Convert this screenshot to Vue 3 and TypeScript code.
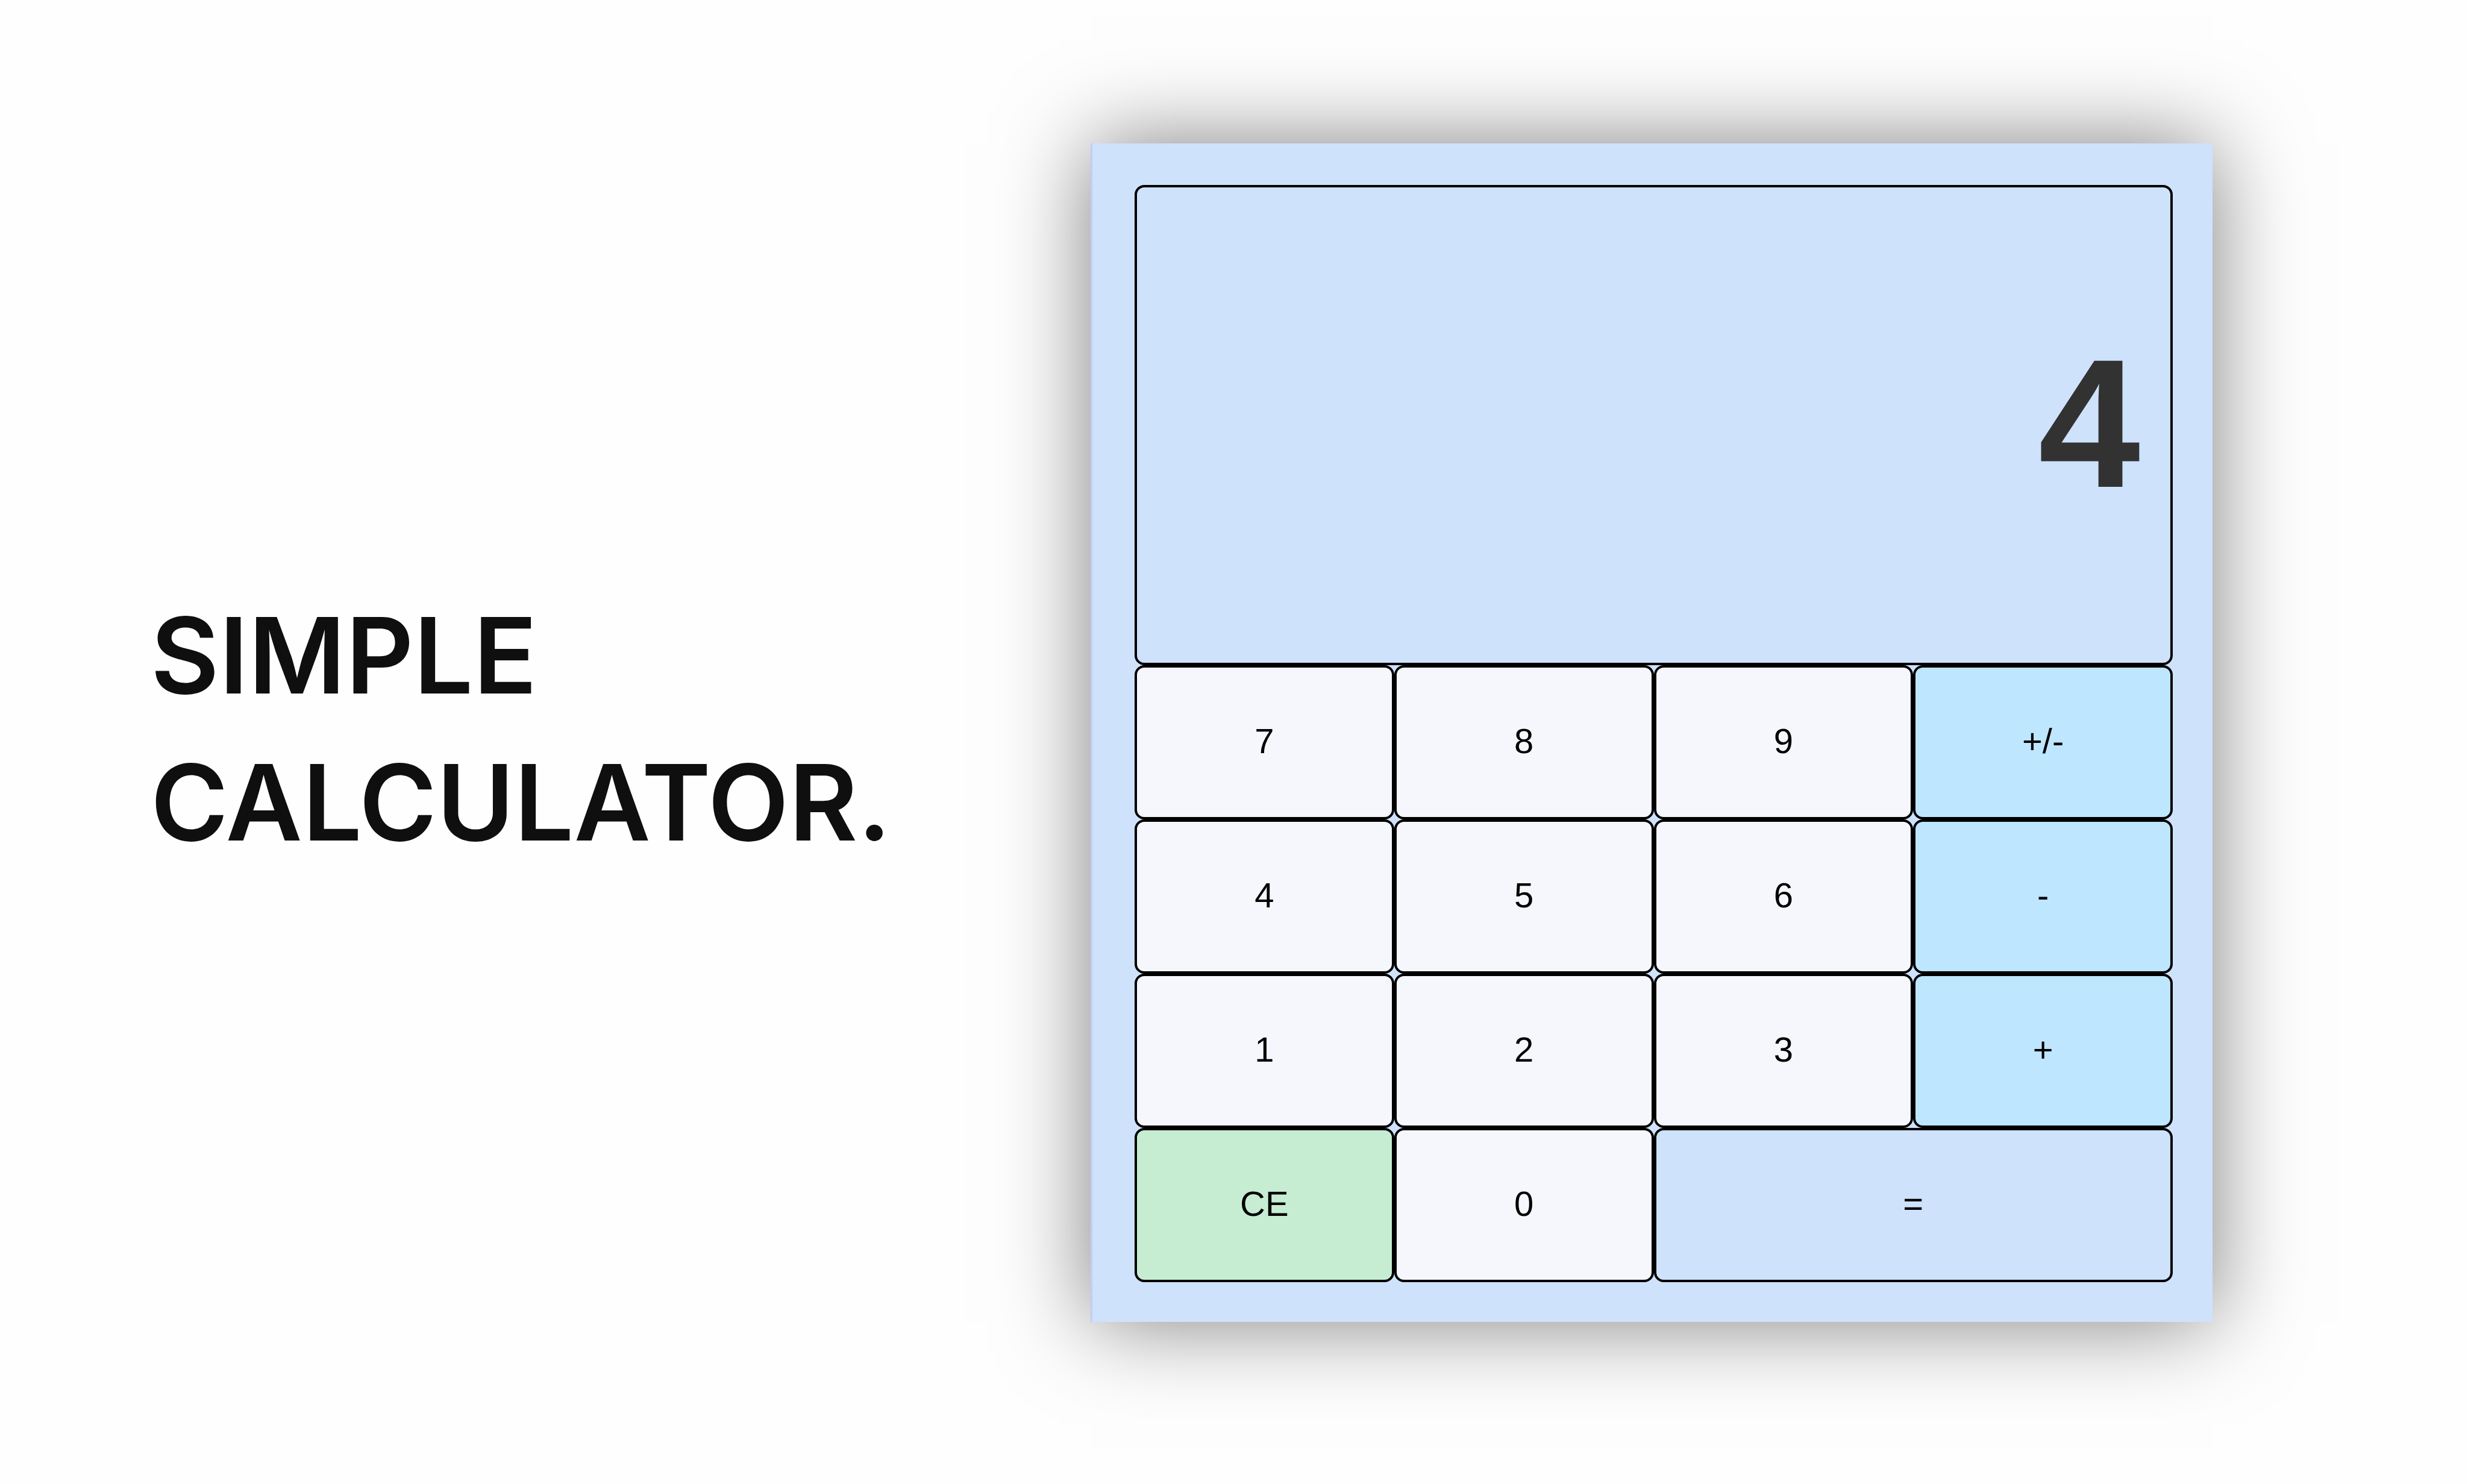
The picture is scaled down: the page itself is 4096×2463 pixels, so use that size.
<script setup lang="ts">
import { ref } from 'vue'

type Tone = 'digit' | 'operator' | 'clear' | 'equals'

interface Key {
  label: string
  tone: Tone
}

const keys: Key[] = [
  { label: '7', tone: 'digit' },
  { label: '8', tone: 'digit' },
  { label: '9', tone: 'digit' },
  { label: '+/-', tone: 'operator' },
  { label: '4', tone: 'digit' },
  { label: '5', tone: 'digit' },
  { label: '6', tone: 'digit' },
  { label: '-', tone: 'operator' },
  { label: '1', tone: 'digit' },
  { label: '2', tone: 'digit' },
  { label: '3', tone: 'digit' },
  { label: '+', tone: 'operator' },
  { label: 'CE', tone: 'clear' },
  { label: '0', tone: 'digit' },
  { label: '=', tone: 'equals' },
]

const shown = ref('4')
const stored = ref(0)
const pending = ref<'+' | '-' | null>(null)
const fresh = ref(true)

function settle() {
  const value = Number(shown.value)
  if (pending.value === '+') stored.value += value
  else if (pending.value === '-') stored.value -= value
  else stored.value = value
  shown.value = String(stored.value)
  fresh.value = true
}

function press(key: Key) {
  if (key.tone === 'digit') {
    shown.value = fresh.value || shown.value === '0' ? key.label : shown.value + key.label
    fresh.value = false
  } else if (key.tone === 'clear') {
    shown.value = '0'
    stored.value = 0
    pending.value = null
    fresh.value = true
  } else if (key.label === '+/-') {
    shown.value = String(-Number(shown.value))
  } else {
    settle()
    pending.value = key.label === '+' || key.label === '-' ? key.label : null
  }
}
</script>

<template>
  <main class="page">
    <h1 class="title">SIMPLE<br />CALCULATOR.</h1>
    <section class="calculator" aria-label="Calculator">
      <output class="display">{{ shown }}</output>
      <button
        v-for="key in keys"
        :key="key.label"
        type="button"
        class="key"
        :class="key.tone"
        @click="press(key)"
      >
        {{ key.label }}
      </button>
    </section>
  </main>
</template>

<style>
body {
  margin: 0;
  background: #fefefe;
}
</style>

<style scoped>
.page {
  box-sizing: border-box;
  min-height: 100vh;
  display: grid;
  grid-template-columns: 1560fr 1862fr;
  align-items: center;
  padding: 238px 424px 269px 250px;
}

.title {
  margin: 0;
  padding-bottom: 14px;
  font-family: Inter, "Liberation Sans", sans-serif;
  font-size: 175px;
  font-weight: 600;
  line-height: 244px;
  color: #0f0f0f;
}

.calculator {
  display: grid;
  grid-template-columns: repeat(4, 1fr);
  grid-template-rows: 797px repeat(4, 256px);
  padding: 69px 66px 66px 73px;
  background: #cfe2fc;
  box-shadow: inset 4px 0 2px -1px #bdd0ec, 0 0 140px rgba(0, 0, 0, 0.5);
  font-family: "Liberation Sans", Arial, sans-serif;
}

.display,
.key {
  box-sizing: border-box;
  border: 4px solid #000;
  border-radius: 16px;
}

.display {
  grid-column: 1 / -1;
  display: flex;
  align-items: center;
  justify-content: flex-end;
  padding: 0 50px 6px 0;
  font-size: 304px;
  font-weight: 700;
  line-height: 1;
  color: #323232;
}

.key {
  margin: 0;
  padding: 0 0 6px;
  font-family: inherit;
  font-size: 58px;
  color: #000;
  cursor: pointer;
}

.digit {
  background: #f6f7fc;
}

.operator {
  background: #bee6ff;
}

.clear {
  background: #c6edd2;
}

.equals {
  grid-column: span 2;
  background: #cfe2fc;
}
</style>
